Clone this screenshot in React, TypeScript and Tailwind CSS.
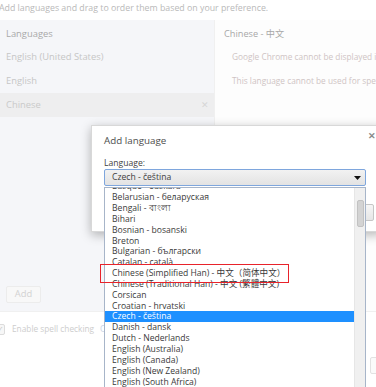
import React from "react";

const langs = [
  "Basque - euskara",
  "Belarusian - беларуская",
  "Bengali - বাংলা",
  "Bihari",
  "Bosnian - bosanski",
  "Breton",
  "Bulgarian - български",
  "Catalan - català",
  "Chinese (Simplified Han) - 中文（简体中文）",
  "Chinese (Traditional Han) - 中文 (繁體中文)",
  "Corsican",
  "Croatian - hrvatski",
  "Czech - čeština",
  "Danish - dansk",
  "Dutch - Nederlands",
  "English (Australia)",
  "English (Canada)",
  "English (New Zealand)",
  "English (South Africa)",
  "English (United Kingdom)",
];

export default function App() {
  return (
    <div className="relative w-[376px] h-[387px] overflow-hidden bg-white font-['Open_Sans','Noto_Sans_CJK_SC',sans-serif] text-[8.6px]">
      {/* background settings page (dimmed) */}
      <div className="flex flex-col">
        <div className="h-[20px] pt-[3px] -ml-[1px] leading-[10px] text-[8.8px] text-[#b9b9b9] whitespace-nowrap">
          Add languages and drag to order them based on your preference.
        </div>
        <div className="flex h-[292px] border-b border-[#f0f0f0]">
          <div className="w-[214px] bg-[#f5f6f9] flex flex-col pt-[2px] text-[9.4px]">
            <div className="h-[23.7px] flex items-center pl-[6px] text-[#a9a9a9]">Languages</div>
            <div className="h-[23.7px] flex items-center pl-[6px] text-[#c6c6c6]">English (United States)</div>
            <div className="h-[23.7px] flex items-center pl-[6px] text-[#c6c6c6]">English</div>
            <div className="h-[23.7px] flex items-center justify-between pl-[6px] pr-[5px] bg-[#eeeeef] text-[#cacaca]">
              <span>Chinese</span>
              <span className="text-[9px] text-[#d6d6d6]">✕</span>
            </div>
            <div className="flex-1" />
            <div className="pl-[6px] pb-[8px]">
              <div className="w-[35px] h-[17px] border border-[#ececec] rounded-[2px] bg-[#f8f8f8] flex items-center justify-center text-[#d2d2d2]">
                Add
              </div>
            </div>
          </div>
          <div className="flex-1 bg-[#fdfdfd] border-l border-[#f0f0f0] flex flex-col pt-[2px] pl-[9px] whitespace-nowrap overflow-hidden text-[8.3px]">
            <div className="h-[23.5px] flex items-center text-[9.2px] text-[#a8a8a8]">Chinese - 中文</div>
            <div className="h-[23.5px] flex items-center pl-[8px] text-[#cfc4c4]">Google Chrome cannot be displayed in this language</div>
            <div className="h-[23.5px] flex items-center pl-[8px] text-[#cfc4c4]">This language cannot be used for spell checking</div>
          </div>
        </div>
        <div className="flex items-center h-[33px] pt-[2px] whitespace-nowrap text-[8.3px]">
          <div className="-ml-[6px] w-[11px] h-[11px] border border-[#dcdcdc] rounded-[2px] bg-[#f7f7f7] flex items-center justify-center text-[8px] text-[#c4c4c4]">✓</div>
          <span className="ml-[7px] text-[#cdcdcd]">Enable spell checking</span>
          <span className="ml-[6px] text-[#c9d4e6]">Customize</span>
        </div>
        <div className="flex justify-end pt-[12px]">
          <div className="w-[20px] h-[17px] -mr-[14px] border border-[#e2e2e2] rounded-[2px] bg-[#fafafa]" />
        </div>
      </div>

      {/* dialog */}
      <div className="absolute left-[91px] top-[125px] w-[292px] h-[107px] bg-white border border-[#d8d8d8] shadow-[0_3px_10px_rgba(0,0,0,0.28)]">
        <div className="flex justify-between items-start">
          <div className="pl-[12px] pt-[8px] text-[9.8px] leading-[14px] text-[#4d4d4d]">Add language</div>
          <div className="pr-[6px] pt-[4px] text-[9px] leading-[12px] font-bold text-[#8a8a8a]">✕</div>
        </div>
        <div className="pl-[12px] pt-[10px] leading-[10px] text-[#3f3f3f]">Language:</div>
        <div className="ml-[12px] mt-[1px] w-[262px] h-[17px] border border-[#7ea6dd] rounded-[2px] bg-gradient-to-b from-[#f2f2f2] to-[#e3e3e3] flex items-center justify-between pl-[7px] pr-[4px] text-[#404040]">
          <span>Czech - čeština</span>
          <svg width="7" height="4" viewBox="0 0 7 4">
            <path d="M0 0 L7 0 L3.5 4 Z" fill="#111" />
          </svg>
        </div>
        <div className="flex justify-end pr-[8px] pt-[18px]">
          <div className="w-[48px] h-[17px] border border-[#c6c6c6] rounded-[2px] bg-gradient-to-b from-[#f6f6f6] to-[#e6e6e6]" />
        </div>
      </div>

      {/* open dropdown list */}
      <div className="absolute left-[104px] top-[187px] w-[262px] h-[210px] bg-white border border-[#a7b5c9] flex overflow-hidden">
        <div className="flex-1 overflow-hidden">
          <div className="-mt-[6.7px]">
            {langs.map((l) => (
              <div
                key={l}
                className={
                  l === "Czech - čeština"
                    ? "h-[10.85px] leading-[10.85px] pl-[7px] whitespace-nowrap bg-[#1e90ff] text-white"
                    : "h-[10.85px] leading-[10.85px] pl-[7px] whitespace-nowrap text-[#3a3a3a]"
                }
              >
                {l}
              </div>
            ))}
          </div>
        </div>
        <div className="w-[11px] bg-[#f0f0f0] border-l border-[#e6e6e6] pt-[12px] pl-[2px]">
          <div className="w-[6.6px] h-[27px] bg-[#d3d3d3] border border-[#c2c2c2] rounded-[2px]" />
        </div>
      </div>

      {/* red highlight box */}
      <div className="absolute left-[100px] top-[264px] w-[189px] h-[18.5px] border-[1.5px] border-[#e8232b]" />
    </div>
  );
}
